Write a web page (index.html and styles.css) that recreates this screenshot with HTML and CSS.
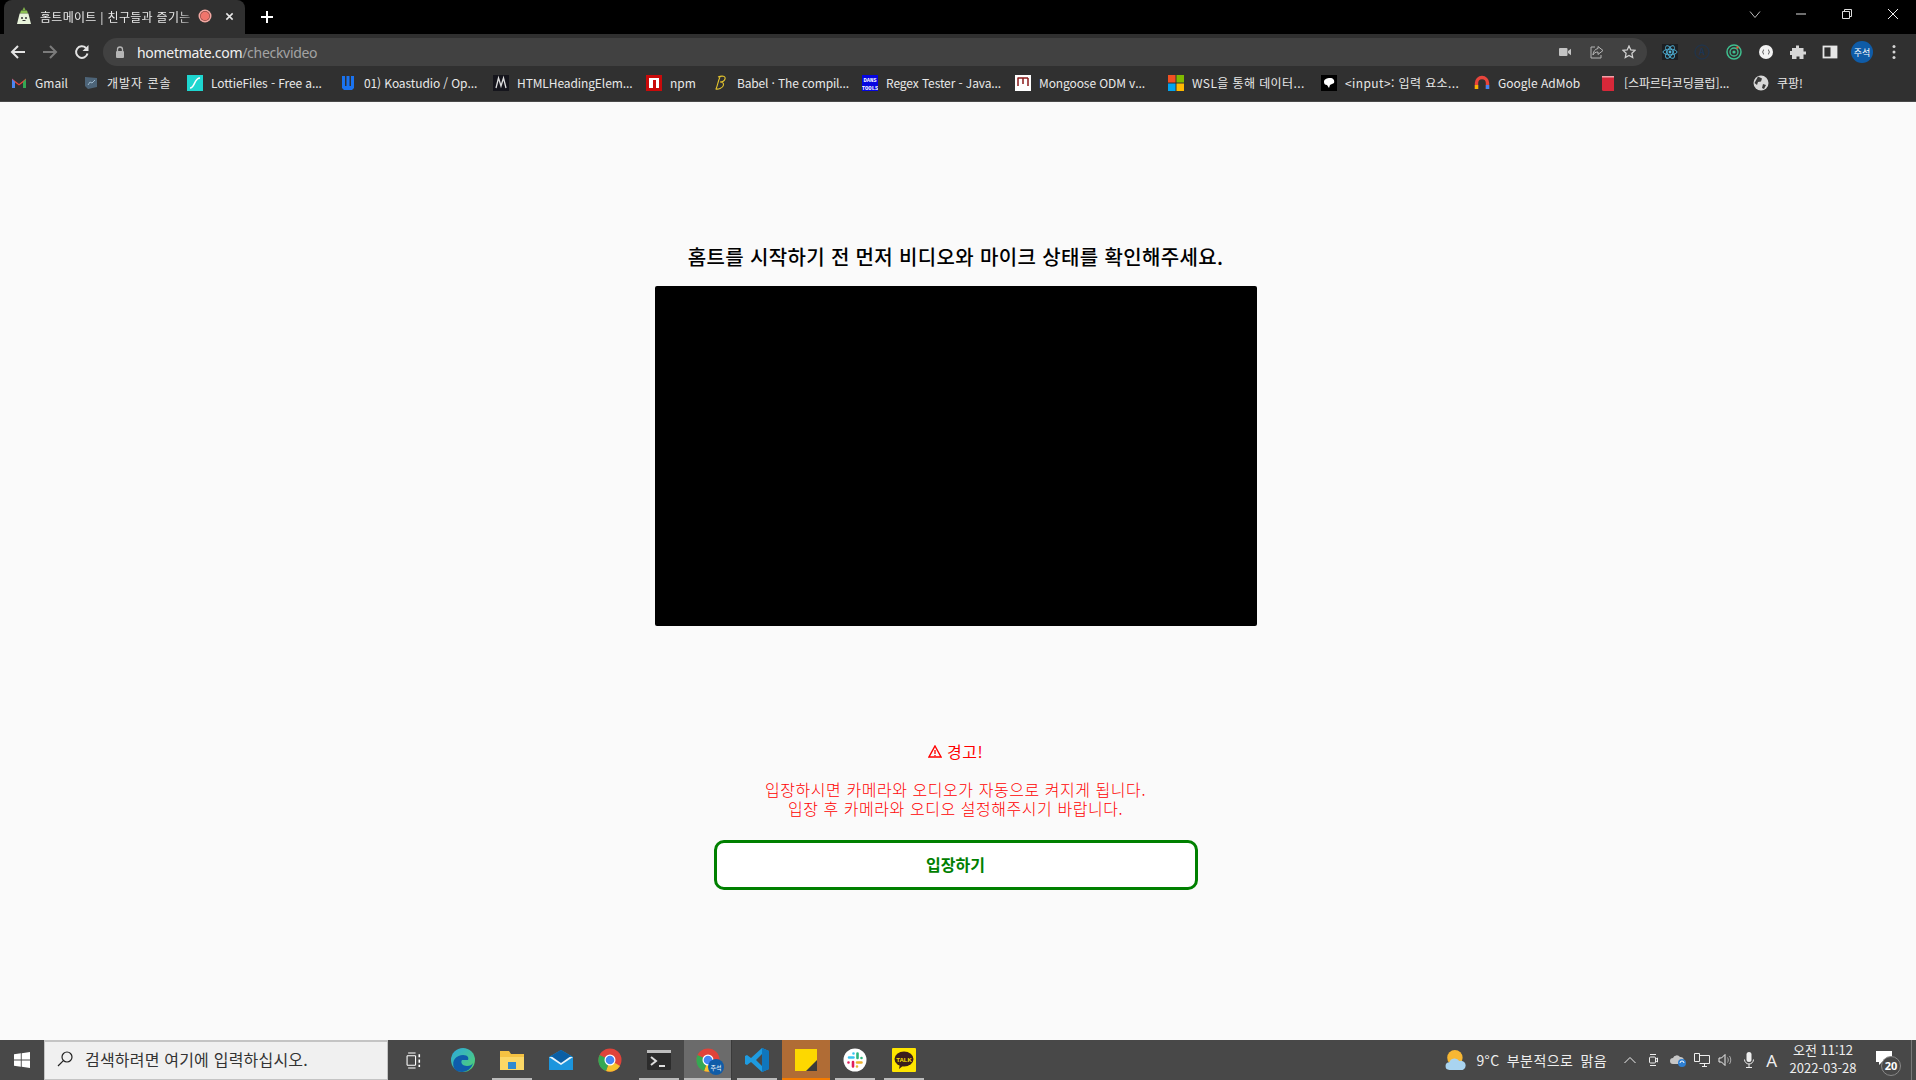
FILE: index.html
```html
<!DOCTYPE html>
<html lang="ko">
<head>
    <meta charset="UTF-8">
    <title>홈트메이트 | 친구들과 즐기는 홈트</title>
    <link rel="stylesheet" href="styles.css">
</head>
<body>
    <!-- browser chrome -->
    <div class="tabstrip">
        <div class="tab">
            <svg class="tab-favicon" viewBox="0 0 16 18"><path d="M8 0l1.600 3.200H6.400z" fill="#7fb04a"/><path d="M5 3.500h6l1 3H4z" fill="#8cc152"/><path d="M3.600 6.500h8.800L15 17H1z" fill="#e8f3da"/><circle cx="6" cy="11" r="1" fill="#333"/><circle cx="10" cy="11" r="1" fill="#333"/><path d="M6.500 13.500h3" stroke="#333"/></svg>
            <span class="tab-title">홈트메이트 | 친구들과 즐기는</span>
            <svg class="tab-rec" viewBox="0 0 14 14"><circle cx="7" cy="7" r="6.500" fill="#f3a8a2"/><circle cx="7" cy="7" r="5" fill="#8e4a46"/><circle cx="7" cy="7" r="4.300" fill="#f0756c"/></svg>
            <svg class="tab-close" viewBox="0 0 10 10"><path d="M1.500 1.500l7 7M8.500 1.500l-7 7" stroke="#e8e8e8" stroke-width="1.700"/></svg>
        </div>
        <svg class="tab-new" viewBox="0 0 14 14"><path d="M7 1v12M1 7h12" stroke="#fff" stroke-width="2"/></svg>
        <div class="window-controls">
            <svg viewBox="0 0 12 12" class="win-drop"><path d="M1 3.500l5 6 5-6" fill="none" stroke="#bbb"/></svg>
            <svg viewBox="0 0 12 12" class="win-min"><path d="M1 6h10" stroke="#ddd"/></svg>
            <svg viewBox="0 0 12 12" class="win-restore"><path d="M1.500 3.500h7v7h-7zM3.500 3.500v-2h7v7h-2" fill="none" stroke="#ddd"/></svg>
            <svg viewBox="0 0 12 12" class="win-close"><path d="M1 1l10 10M11 1L1 11" stroke="#eee"/></svg>
        </div>
    </div>

    <div class="toolbar">
        <svg class="nav-icon" viewBox="0 0 16 16"><path d="M15 8H2M8 2L2 8l6 6" fill="none" stroke="#e3e3e3" stroke-width="2"/></svg>
        <svg class="nav-icon" viewBox="0 0 16 16"><path d="M1 8h13M8 2l6 6-6 6" fill="none" stroke="#7b7b7b" stroke-width="2"/></svg>
        <svg class="nav-icon" viewBox="0 0 16 16"><path d="M13.500 9.500A5.800 5.800 0 1 1 12 4" fill="none" stroke="#e3e3e3" stroke-width="2"/><path d="M14.500 1v6h-6z" fill="#e3e3e3"/></svg>
        <div class="omnibox">
            <svg class="lock" viewBox="0 0 10 12"><path d="M2.500 5V3.500a2.500 2.500 0 0 1 5 0V5" fill="none" stroke="#b5b5b5" stroke-width="1.300"/><rect x="1" y="5" width="8" height="7" rx="1" fill="#b5b5b5"/></svg>
            <span class="url">hometmate.com<span class="url-path">/checkvideo</span></span>
            <svg class="omni-icon" viewBox="0 0 14 14"><rect x="1" y="3" width="8.500" height="8" rx="1" fill="#c4c4c4"/><path d="M10 6l3-2.200v6.400L10 8z" fill="#c4c4c4"/></svg>
            <svg class="omni-icon" viewBox="0 0 14 14"><path d="M5 2H1v11h10v-3" fill="none" stroke="#b5b5b5"/><path d="M8 1.500l5 4-5 4V7C5.500 7 4 8 3 10c0-3 2-6 5-6.500z" fill="none" stroke="#b5b5b5"/></svg>
            <svg class="omni-icon" viewBox="0 0 14 14"><path d="M7 1l1.800 3.900 4.200.5-3.100 2.900.8 4.200L7 10.400 3.300 12.500l.8-4.200L1 5.400l4.200-.5z" fill="none" stroke="#d0d0d0" stroke-width="1.300"/></svg>
        </div>
        <div class="extensions">
            <span class="ext-box">
                <svg viewBox="0 0 16 16"><g fill="none" stroke="#4fb3d9" stroke-width=".9"><ellipse cx="8" cy="8" rx="7" ry="2.800"/><ellipse cx="8" cy="8" rx="7" ry="2.800" transform="rotate(60 8 8)"/><ellipse cx="8" cy="8" rx="7" ry="2.800" transform="rotate(120 8 8)"/></g><circle cx="8" cy="8" r="1.400" fill="#4fb3d9"/></svg>
            </span>
            <svg class="ext" viewBox="0 0 16 16"><circle cx="8" cy="8" r="7" fill="none" stroke="#1c3553"/><text x="8" y="11" class="ext-a">A</text></svg>
            <svg class="ext" viewBox="0 0 16 16"><circle cx="8" cy="8" r="7" fill="none" stroke="#3fbf8f" stroke-width="1.500"/><circle cx="8" cy="8" r="4" fill="none" stroke="#3fbf8f" stroke-width="1.300"/><circle cx="8" cy="8" r="1.600" fill="#3fbf8f"/><circle cx="11.500" cy="3.500" r="1.200" fill="#e0593c"/></svg>
            <svg class="ext" viewBox="0 0 16 16"><circle cx="8" cy="8" r="7" fill="#f2f2f2"/><path d="M6 5.500c-1 0-.5 2.500-1.500 2.500 1 0 .5 2.500 1.500 2.500M10 5.500c1 0 .5 2.500 1.500 2.500-1 0-.5 2.500-1.500 2.500" fill="none" stroke="#333" stroke-width=".8"/></svg>
            <svg class="ext" viewBox="0 0 16 16"><path d="M6 1.500h3V4h4.500v3.500H16v3h-2.500V15H9.500v-2.500h-3V15H2v-4H0V7h2V4h4z" fill="#d5d5d5"/></svg>
            <svg class="ext" viewBox="0 0 16 16"><rect x="1.500" y="2.500" width="13" height="11" fill="none" stroke="#e6e6e6" stroke-width="1.800"/><rect x="8.500" y="2.500" width="6" height="11" fill="#e6e6e6"/></svg>
            <span class="profile">주석</span>
            <svg class="ext-menu" viewBox="0 0 4 16"><circle cx="2" cy="2.500" r="1.500" fill="#d5d5d5"/><circle cx="2" cy="8" r="1.500" fill="#d5d5d5"/><circle cx="2" cy="13.500" r="1.500" fill="#d5d5d5"/></svg>
        </div>
    </div>

    <div class="bookmarks">
        <a class="bm"><svg viewBox="0 0 16 16"><path d="M1 13V3.500L8 9l7-5.500V13h-3V7.500L8 10.500 4 7.500V13z" fill="#e8453c"/><path d="M1 13V4l3 3v6z" fill="#4a85f0"/><path d="M12 13V7l3-3v9z" fill="#34a853"/></svg><span class="bm-gmail">Gmail</span></a>
        <a class="bm"><svg viewBox="0 0 16 16"><path d="M2 2l12 1v9l-9 2-3-3z" fill="#4d6478"/><path d="M5 10l2-3 2 1 3-3" fill="none" stroke="#9db8cc"/></svg><span class="bm-console">개발자 콘솔</span></a>
        <a class="bm"><svg viewBox="0 0 16 16"><rect width="16" height="16" fill="#1ed6d0"/><path d="M3 13c5 0 4-10 10-10" fill="none" stroke="#fff" stroke-width="1.500"/></svg><span class="bm-cut">LottieFiles - Free a...</span></a>
        <a class="bm"><svg viewBox="0 0 16 16"><path d="M2 1h3v10h1.500V1h3v10H11V1h3v12l-2 2H4l-2-2z" fill="#1a73f0"/></svg><span class="bm-cut">01) Koastudio / Op...</span></a>
        <a class="bm"><svg viewBox="0 0 16 16"><rect width="16" height="16" fill="#15151c"/><path d="M3 13L5.500 3 8 11l2.500-8L13 13" fill="none" stroke="#ddd" stroke-width="1.300"/></svg><span class="bm-cut">HTMLHeadingElem...</span></a>
        <a class="bm"><svg viewBox="0 0 16 16"><rect width="16" height="16" fill="#c90a0a"/><rect x="3" y="3" width="10" height="10" fill="#fff"/><rect x="7" y="5" width="3" height="8" fill="#c90a0a"/></svg><span class="bm-npm">npm</span></a>
        <a class="bm"><svg viewBox="0 0 16 16"><path d="M5 2c4-1.500 8-1 7 2s-5 3-5 3 4-.5 3.500 3-6 4.500-7.500 4c1.500-3 2-8 4-12" fill="none" stroke="#e6c62e" stroke-width="1.100"/></svg><span class="bm-babel">Babel · The compil...</span></a>
        <a class="bm"><svg viewBox="0 0 16 16"><rect width="16" height="16" fill="#0606e0"/><text x="8" y="7" class="fav-text">DANS</text><text x="8" y="14.500" class="fav-text">TOOLS</text></svg><span class="bm-cut">Regex Tester - Java...</span></a>
        <a class="bm"><svg viewBox="0 0 16 16"><rect width="16" height="16" fill="#fff"/><path d="M3 11V2.500M3 3h10M8 3v6M13 3v8" fill="none" stroke="#8a1c1c" stroke-width="1.500"/></svg><span class="bm-cut">Mongoose ODM v...</span></a>
        <a class="bm"><svg viewBox="0 0 16 16"><rect width="7.500" height="7.500" fill="#f25022"/><rect x="8.500" width="7.500" height="7.500" fill="#7fba00"/><rect y="8.500" width="7.500" height="7.500" fill="#00a4ef"/><rect x="8.500" y="8.500" width="7.500" height="7.500" fill="#ffb900"/></svg><span class="bm-cut bm-ko">WSL을 통해 데이터...</span></a>
        <a class="bm"><svg viewBox="0 0 16 16"><rect width="16" height="16" fill="#000"/><path d="M3 7c0-3 3-4 6-4s5 2 4 5c-1 1-3 1-4 2l-1 3-2-3C4 10 3 9 3 7z" fill="#fff"/></svg><span class="bm-cut bm-ko">&lt;input&gt;: 입력 요소...</span></a>
        <a class="bm"><svg viewBox="0 0 16 16"><path d="M2.500 14V8a5.500 5.500 0 0 1 11 0v6" fill="none" stroke="#e8453c" stroke-width="3.400"/><path d="M2.500 10v4" stroke="#f5b400" stroke-width="3.400"/><path d="M13.500 10v4" stroke="#4285f4" stroke-width="3.400"/></svg><span class="bm-admob">Google AdMob</span></a>
        <a class="bm"><svg viewBox="0 0 16 16"><path d="M2 1h12v15H3.500A1.500 1.500 0 0 1 2 14.500z" fill="#d62839"/><path d="M2 1h12v1.500H2z" fill="#f2a0a8"/></svg><span class="bm-cut">[스파르타코딩클럽]...</span></a>
        <a class="bm"><svg viewBox="0 0 16 16"><circle cx="8" cy="8" r="7.500" fill="#d8d8d8"/><path d="M5 1.500l4 2-1 3-3 .5-1 3-2.500-2zM10 9l3 1-2 4-2-1z" fill="#3a3a3a"/></svg><span>쿠팡!</span></a>
    </div>

    <!-- page -->
    <main class="page">
        <h1 class="page-title">홈트를 시작하기 전 먼저 비디오와 마이크 상태를 확인해주세요.</h1>
        <video class="preview"></video>
        <p class="warning-head"><svg class="warn-icon" viewBox="0 0 14 13"><path d="M7 1l6 11H1z" fill="none" stroke="#f00" stroke-width="1.400"/><path d="M7 5v4M7 10v1.200" stroke="#f00" stroke-width="1.300"/></svg>경고!</p>
        <p class="warning-text">입장하시면 카메라와 오디오가 자동으로 켜지게 됩니다.<br>입장 후 카메라와 오디오 설정해주시기 바랍니다.</p>
        <button class="enter-btn">입장하기</button>
    </main>

    <!-- windows taskbar -->
    <footer class="taskbar">
        <div class="start"><svg viewBox="0 0 16 16"><path d="M0 2.300L6.800 1.300V7.500H0zM7.700 1.200L16 0V7.500H7.700zM0 8.400H6.800V14.700L0 13.700zM7.700 8.400H16V16L7.700 14.800z" fill="#fff"/></svg></div>
        <div class="search">
            <svg viewBox="0 0 16 16"><circle cx="10" cy="6" r="5" fill="none" stroke="#222" stroke-width="1.200"/><path d="M6.400 9.600L1 15" stroke="#222" stroke-width="1.200"/></svg>
            <span>검색하려면 여기에 입력하십시오.</span>
        </div>
        <div class="task-apps">
            <div class="app app-view"><svg viewBox="0 0 16 16"><path d="M1 3.500h8M1 12.500h8M1 3.500v9M9 3.500v9M2 1h7M2 15h7" fill="none" stroke="#fff"/><path d="M12.500 2v3M12.500 7v3M12.500 12v2" stroke="#fff" stroke-width="1.500"/></svg></div>
            <div class="app"><svg viewBox="0 0 24 24"><defs><linearGradient id="edge" x1="0" y1="0" x2="1" y2="1"><stop offset="0" stop-color="#2ba7e0"/><stop offset="1" stop-color="#54d468"/></linearGradient></defs><circle cx="12" cy="12" r="12" fill="url(#edge)"/><path d="M3 20c-3-8 3-13 9-13 5 0 6 3 5 5h-6c-2 3 1 6 5 6 3 0 5-1 6-3-1 5-6 9-11 9-3 0-6-1-8-4z" fill="#0f5cab"/></svg></div>
            <div class="app on"><svg viewBox="0 0 24 24"><path d="M0 3h9l2 3h13v15H0z" fill="#f5c242"/><path d="M0 9h24v13H0z" fill="#fbd766"/><rect x="8" y="14" width="8" height="7" fill="#2f8ad0"/></svg></div>
            <div class="app"><svg viewBox="0 0 24 24"><path d="M0 9L12 2l12 7v13H0z" fill="#1b95dd"/><path d="M0 9l12 8 12-8" fill="#e8f4fb"/><path d="M2 8l10-6 10 6-10 7z" fill="#0b5fa5"/></svg></div>
            <div class="app"><svg viewBox="0 0 24 24"><circle cx="12" cy="12" r="11.500" fill="#e0433a"/><path d="M12 12L22 18A11.500 11.500 0 0 1 8 23z" fill="#f6c22d"/><path d="M12 12L8 23A11.500 11.500 0 0 1 1.500 7z" fill="#34a853"/><circle cx="12" cy="12" r="5.500" fill="#fff"/><circle cx="12" cy="12" r="4.300" fill="#4285f4"/></svg></div>
            <div class="app on"><svg viewBox="0 0 24 20"><rect width="24" height="20" rx="1" fill="#2c2c2c"/><rect width="24" height="3" fill="#bdbdbd"/><path d="M4 7l5 4-5 4" fill="none" stroke="#ddd" stroke-width="2"/><path d="M12 16h6" stroke="#ddd" stroke-width="2"/></svg></div>
            <div class="app on app-active">
                <svg viewBox="0 0 24 24"><circle cx="12" cy="12" r="11.500" fill="#e0433a"/><path d="M12 12L22 18A11.500 11.500 0 0 1 8 23z" fill="#f6c22d"/><path d="M12 12L8 23A11.500 11.500 0 0 1 1.500 7z" fill="#34a853"/><circle cx="12" cy="12" r="5.500" fill="#fff"/><circle cx="12" cy="12" r="4.300" fill="#4285f4"/></svg>
                <span class="app-badge">주석</span>
            </div>
            <div class="app on"><svg viewBox="0 0 24 24"><path d="M17 0l7 3v18l-7 3-11-10-4 3-2-1V8l2-1 4 3zM17 6l-6 6 6 6z" fill="#1e9be0"/><path d="M17 0l7 3v18l-7 3z" fill="#0f76bd"/></svg></div>
            <div class="app on app-sticky"><svg viewBox="0 0 24 24"><path d="M1 1h22v22H1z" fill="#fdd800"/><path d="M23 12L12 23h11z" fill="#3a3a3a"/></svg></div>
            <div class="app on"><svg viewBox="0 0 24 24"><circle cx="12" cy="12" r="11.500" fill="#fff"/><g fill="none" stroke-width="2.600" stroke-linecap="round"><path d="M6 9.500h4.500M10.500 5.500v.01" stroke="#36c5f0"/><path d="M14.500 5.500V10M18.500 10v.01" stroke="#2eb67d"/><path d="M14 14.500h4.500M14 18.500v.01" stroke="#ecb22e"/><path d="M10 14v4.500M5.500 14.500v.01" stroke="#e01e5a"/></g></svg></div>
            <div class="app on"><svg viewBox="0 0 24 24"><rect width="24" height="24" rx="1" fill="#fee500"/><ellipse cx="12" cy="11" rx="9.500" ry="7.500" fill="#3a1d1d"/><path d="M8 16l-1 5 5-4z" fill="#3a1d1d"/><text x="12" y="13.500" class="talk-text">TALK</text></svg></div>
        </div>
        <div class="tray">
            <svg class="tray-weather" viewBox="0 0 20 20"><circle cx="9" cy="8" r="7" fill="#f7b733"/><path d="M4 19a3.500 3.500 0 0 1 0-7 5 5 0 0 1 9-1 4 4 0 0 1 3 8z" fill="#a9d4f0"/></svg>
            <span class="tray-temp">9°C 부분적으로 맑음</span>
            <svg class="tray-up" viewBox="0 0 12 8"><path d="M.5 7L6 1.500 11.500 7" fill="none" stroke="#eee"/></svg>
            <svg class="tray-meet" viewBox="0 0 9 14"><rect x=".5" y="4" width="6" height="6" rx="1" fill="none" stroke="#eee"/><path d="M1 1.500h6M1 12.500h6M7 6l1.500-1v4L7 8" fill="none" stroke="#eee"/></svg>
            <svg class="tray-cloud" viewBox="0 0 16 14"><path d="M3 11a3 3 0 0 1 0-6 4 4 0 0 1 7-1 3.500 3.500 0 0 1 4 3.500V11z" fill="#c6c6c6"/><circle cx="12" cy="10" r="4" fill="#2d7fd3"/><path d="M10 10a2 2 0 0 1 4 0" fill="none" stroke="#fff"/></svg>
            <svg class="tray-net" viewBox="0 0 16 14"><path d="M.5 .5h5v8h-5zM5.500 2.500h10v8h-10M8 13.500h5M10.500 10.500v3" fill="none" stroke="#eee"/></svg>
            <svg class="tray-vol" viewBox="0 0 16 14"><path d="M1 5h2.500L7 1.500v11L3.500 9H1z" fill="none" stroke="#eee"/><path d="M9.500 4.500c1 1.500 1 3.500 0 5M11.500 3c1.700 2.400 1.700 5.600 0 8" fill="none" stroke="#aaa"/></svg>
            <svg class="tray-mic" viewBox="0 0 10 16"><rect x="2.500" y="0" width="5" height="10" rx="2.500" fill="#eee"/><path d="M.5 7.500a4.500 4.500 0 0 0 9 0M5 12v3M2 15.500h6" fill="none" stroke="#eee"/></svg>
            <span class="tray-ime">A</span>
            <div class="clock"><span>오전 11:12</span><span>2022-03-28</span></div>
            <div class="notify">
                <svg viewBox="0 0 16 14"><path d="M0 0h16v11H6l-3 3v-3H0z" fill="#fff"/></svg>
                <span class="notify-count">20</span>
            </div>
            <div class="show-desktop"></div>
        </div>
    </footer>
</body>
</html>
```
FILE: styles.css
```css
* {
    box-sizing: border-box;
}

html, body {
    margin: 0;
    padding: 0;
}

body {
    width: 1916px;
    height: 1080px;
    overflow: hidden;
    display: flex;
    flex-direction: column;
    font-family: "Noto Sans CJK KR", "Noto Sans", sans-serif;
    background: #fafafa;
}

/* tab strip */
.tabstrip {
    height: 34px;
    background: #000;
    display: flex;
    align-items: flex-end;
    flex: none;
}

.tab {
    width: 241px;
    height: 34px;
    margin-left: 4px;
    background: #303030;
    border-radius: 8px 8px 0 0;
    display: flex;
    align-items: center;
    padding: 0 0 2px 12px;
}

.tab-favicon {
    width: 16px;
    height: 18px;
    flex: none;
}

.tab-title {
    width: 158px;
    margin-left: 8px;
    color: #e8e8e8;
    font-size: 12px;
    letter-spacing: .3px;
    white-space: nowrap;
    -webkit-mask-image: linear-gradient(to right, #000 88%, transparent);
    mask-image: linear-gradient(to right, #000 88%, transparent);
}

.tab-rec {
    width: 14px;
    height: 14px;
    flex: none;
}

.tab-close {
    width: 9px;
    height: 9px;
    margin-left: 13px;
    flex: none;
}

.tab-new {
    width: 14px;
    height: 14px;
    margin: 0 0 10px 15px;
    flex: none;
}

.window-controls {
    margin-left: auto;
    display: flex;
    align-self: flex-start;
    align-items: center;
    height: 28px;
}

.window-controls svg {
    width: 12px;
    height: 12px;
}

.win-drop,
.win-min,
.win-restore {
    margin-right: 34px;
}

.win-close {
    margin-right: 17px;
}

/* toolbar */
.toolbar {
    height: 32px;
    background: #303030;
    display: flex;
    align-items: center;
    flex: none;
    padding: 4px 0 0 10px;
}

.nav-icon {
    width: 16px;
    height: 16px;
    margin-right: 16px;
    flex: none;
}

.omnibox {
    width: 1544px;
    height: 28px;
    margin-left: -3px;
    background: #414141;
    border-radius: 14px;
    display: flex;
    align-items: center;
    padding-left: 12px;
    flex: none;
}

.lock {
    width: 10px;
    height: 12px;
    flex: none;
}

.url {
    margin-left: 12px;
    color: #f0f0f0;
    font-family: "Noto Sans", sans-serif;
    font-size: 14px;
    letter-spacing: -.3px;
}

.url-path {
    color: #a3a3a3;
}

.omni-icon {
    width: 14px;
    height: 14px;
    margin-left: 18px;
    flex: none;
}

.omni-icon:nth-of-type(2) {
    margin-left: auto;
}

.omni-icon:last-child {
    margin-right: 11px;
}

.extensions {
    display: flex;
    align-items: center;
    flex: 1;
    padding-left: 15px;
}

.ext-box {
    width: 16px;
    height: 16px;
    background: #1d1f22;
    display: flex;
    flex: none;
}

.ext {
    width: 16px;
    height: 16px;
    margin-left: 16px;
    flex: none;
}

.ext-a {
    font-size: 9px;
    font-weight: 700;
    fill: #1c3553;
    text-anchor: middle;
}

.profile {
    width: 22px;
    height: 22px;
    margin-left: 13px;
    border-radius: 50%;
    background: #0f5ca8;
    color: #fff;
    font-size: 9px;
    display: flex;
    align-items: center;
    justify-content: center;
    flex: none;
}

.ext-menu {
    width: 4px;
    height: 16px;
    margin-left: 19px;
    flex: none;
}

/* bookmarks */
.bookmarks {
    height: 36px;
    background: #303030;
    border-bottom: 1px solid #4a4a4a;
    display: flex;
    align-items: center;
    padding: 0 0 2px 11px;
    gap: 16px;
    flex: none;
}

.bm {
    display: flex;
    align-items: center;
    gap: 8px;
    color: #e8e8e8;
    font-size: 12px;
    white-space: nowrap;
}

.bm svg {
    width: 16px;
    height: 16px;
    flex: none;
}

.bm-cut {
    width: 113px;
    letter-spacing: -.1px;
}

.bm-ko {
    letter-spacing: .4px;
}

.bm-gmail {
    width: 32px;
}

.bm-console {
    width: 64px;
    letter-spacing: 1px;
}

.bm-npm {
    width: 27px;
}

.bm-babel {
    width: 109px;
    letter-spacing: -.15px;
}

.bm-admob {
    width: 86px;
}

.fav-text {
    font-family: "Liberation Mono", monospace;
    font-size: 5.500px;
    font-weight: 700;
    fill: #fff;
    text-anchor: middle;
}

/* page */
.page {
    flex: 1;
    display: flex;
    flex-direction: column;
    align-items: center;
    padding: 140px 5px 0 0;
}

.page-title {
    margin: 0;
    height: 30px;
    line-height: 30px;
    color: #000;
    font-size: 20px;
    font-weight: 500;
    letter-spacing: .35px;
    white-space: nowrap;
}

.preview {
    width: 602px;
    height: 340px;
    margin-top: 14px;
    background: #000;
    border-radius: 2px;
    display: block;
}

.warning-head {
    margin: 115px 0 0;
    line-height: 20px;
    color: #f00;
    font-size: 16px;
    letter-spacing: .5px;
    display: flex;
    align-items: center;
}

.warn-icon {
    width: 14px;
    height: 13px;
    margin-right: 5px;
}

.warning-text {
    margin: 19px 0 0;
    line-height: 19px;
    color: #f00;
    font-size: 16px;
    font-weight: 300;
    letter-spacing: .55px;
    text-align: center;
}

.enter-btn {
    width: 484px;
    height: 50px;
    margin-top: 22px;
    padding: 0 0 2px;
    background: #fff;
    border: 3px solid #008000;
    border-radius: 10px;
    color: #008000;
    font-family: inherit;
    font-size: 16px;
    font-weight: 700;
}

/* taskbar */
.taskbar {
    height: 40px;
    background: #484848;
    display: flex;
    flex: none;
}

.start {
    width: 44px;
    display: flex;
    align-items: center;
    justify-content: center;
}

.start svg {
    width: 16px;
    height: 16px;
}

.search {
    width: 344px;
    background: #f0f0f0;
    border: 1px solid #c4c4c4;
    border-top-width: 2px;
    display: flex;
    align-items: center;
    padding: 0 0 3px 12px;
    color: #333;
    font-size: 16px;
    letter-spacing: .2px;
}

.search svg {
    width: 16px;
    height: 16px;
    margin-right: 12px;
    flex: none;
}

.task-apps {
    display: flex;
    margin-left: 11px;
}

.app {
    width: 48px;
    height: 40px;
    position: relative;
    display: flex;
    align-items: center;
    justify-content: center;
    margin-left: 1px;
}

.app svg {
    width: 24px;
    height: 24px;
}

.app-view {
    width: 24px;
    margin-right: 12px;
    margin-left: 3px;
}

.app-view svg {
    width: 17px;
    height: 17px;
}

.app.on::after {
    content: "";
    position: absolute;
    left: 4px;
    right: 4px;
    bottom: 0;
    height: 2px;
    background: #bbb;
}

.app-active {
    background: #6b6b6b;
    border-right: 1px solid #3a3a3a;
}

.app-active::after {
    left: 0 !important;
    right: 0 !important;
}

.app-badge {
    position: absolute;
    right: 7px;
    bottom: 5px;
    width: 16px;
    height: 16px;
    border-radius: 50%;
    background: #0f5ca8;
    color: #fff;
    font-size: 6px;
    display: flex;
    align-items: center;
    justify-content: center;
}

.app-sticky {
    background: #b06c35;
}

.app-sticky::after {
    left: 0 !important;
    right: 0 !important;
    background: #f57c00 !important;
}

.talk-text {
    font-family: "Liberation Sans", sans-serif;
    font-size: 6px;
    font-weight: 700;
    fill: #fee500;
    text-anchor: middle;
}

.tray {
    margin-left: auto;
    display: flex;
    align-items: center;
    color: #eee;
}

.tray-weather {
    width: 22px;
    height: 22px;
}

.tray-temp {
    margin-left: 9px;
    font-size: 14px;
    letter-spacing: .4px;
    word-spacing: 3px;
    white-space: nowrap;
}

.tray-up {
    width: 12px;
    height: 8px;
    margin-left: 17px;
}

.tray-meet {
    width: 9px;
    height: 14px;
    margin-left: 13px;
}

.tray-cloud {
    width: 16px;
    height: 14px;
    margin-left: 12px;
}

.tray-net {
    width: 16px;
    height: 14px;
    margin-left: 8px;
}

.tray-vol {
    width: 16px;
    height: 14px;
    margin-left: 8px;
}

.tray-mic {
    width: 10px;
    height: 16px;
    margin-left: 10px;
}

.tray-ime {
    margin-left: 12px;
    font-family: "Noto Sans", sans-serif;
    font-size: 17px;
}

.clock {
    width: 80px;
    margin: 0 0 2px 6px;
    display: flex;
    flex-direction: column;
    align-items: center;
    font-size: 13px;
    line-height: 18px;
}

.notify {
    width: 30px;
    height: 40px;
    margin-left: 9px;
    position: relative;
}

.notify svg {
    width: 16px;
    height: 14px;
    position: absolute;
    left: 4px;
    top: 11px;
}

.notify-count {
    position: absolute;
    left: 9px;
    top: 16px;
    width: 20px;
    height: 20px;
    border-radius: 50%;
    border: 1px solid #888;
    background: #484848;
    color: #fff;
    font-family: "Noto Sans", sans-serif;
    font-size: 11px;
    font-weight: 700;
    line-height: 18px;
    text-align: center;
}

.show-desktop {
    width: 1px;
    height: 40px;
    margin-left: 9px;
    margin-right: 4px;
    background: #777;
}
```
